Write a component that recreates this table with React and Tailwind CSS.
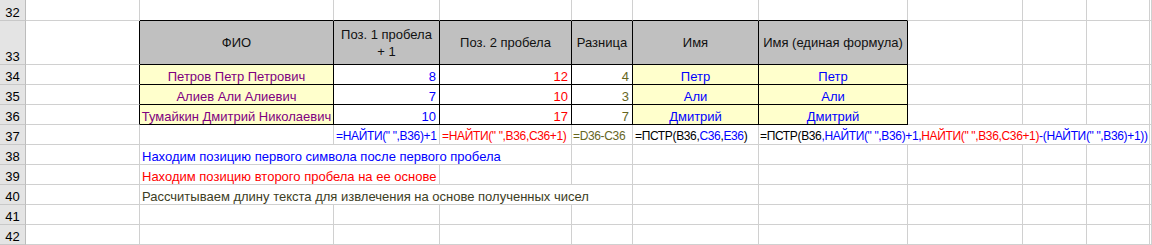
const SPAN = {
  1: "",
  2: "col-span-2",
  3: "col-span-3",
  4: "col-span-4",
};

const Cell = ({ span = 1, dark, darkR, darkB, className = "", children }) => {
  const r = dark || darkR ? "border-r-black" : "border-r-[#d0d0d0]";
  const b = dark || darkB ? "border-b-black" : "border-b-[#d0d0d0]";
  return (
    <div
      className={`${SPAN[span]} flex items-end whitespace-nowrap overflow-visible border-r border-b ${r} ${b} ${className}`}
    >
      {children}
    </div>
  );
};

const RowHead = ({ n }) => (
  <div className="flex items-end justify-center border-r border-b border-r-[#bcbcbc] border-b-[#c8c8c8] bg-[#e4e4e4] text-black">
    {n}
  </div>
);

const Blank = ({ count }) =>
  Array.from({ length: count }).map((_, i) => <Cell key={i} />);

const names = [
  ["Петров Петр Петрович", 8, 12, 4, "Петр"],
  ["Алиев Али Алиевич", 7, 10, 3, "Али"],
  ["Тумайкин Дмитрий Николаевич", 10, 17, 7, "Дмитрий"],
];

const headers = [
  "ФИО",
  "Поз. 1 пробела + 1",
  "Поз. 2 пробела",
  "Разница",
  "Имя",
  "Имя (единая формула)",
];

// formulas in row 37 render narrower than the plain text
const formula = "text-[12px] tracking-[-0.35px]";

export default function App() {
  return (
    <div className="w-[1152px] h-[245px] overflow-hidden bg-white font-['Liberation_Sans',Arial,sans-serif] text-[13px] leading-[15px]">
      <div className="grid grid-cols-[26px_114px_194px_106px_132px_61px_126px_149px_115px_64px_63px_1fr] grid-rows-[21px_44px_20px_20px_20px_20px_20px_20px_20px_20px_20px]">
        {/* 32 */}
        <RowHead n={32} />
        <Cell />
        {[0, 1, 2, 3, 4, 5].map((i) => (
          <Cell key={i} darkB />
        ))}
        <Blank count={4} />

        {/* 33 */}
        <RowHead n={33} />
        <Cell darkR />
        {headers.map((h) => (
          <Cell
            key={h}
            dark
            className="!items-center justify-center text-center whitespace-normal bg-[#c0c0c0] text-[#111] leading-[17px] px-1"
          >
            {h === "Поз. 1 пробела + 1" ? (
              <span>
                Поз. 1 пробела
                <br />+ 1
              </span>
            ) : (
              h
            )}
          </Cell>
        ))}
        <Blank count={4} />

        {/* 34 - 36 */}
        {names.map(([fio, c, d, e, name], i) => (
          <div key={fio} className="contents">
            <RowHead n={34 + i} />
            <Cell darkR />
            <Cell dark className="justify-center bg-[#ffffcc] text-[#800080]">
              {fio}
            </Cell>
            <Cell dark className="justify-end pr-[3px] text-[#0000ff]">
              {c}
            </Cell>
            <Cell dark className="justify-end pr-[3px] text-[#ff0000]">
              {d}
            </Cell>
            <Cell dark className="justify-end pr-[3px] text-[#66661f]">
              {e}
            </Cell>
            <Cell dark className="justify-center bg-[#ffffcc] text-[#0000ff]">
              {name}
            </Cell>
            <Cell dark className="justify-center bg-[#ffffcc] text-[#0000ff]">
              {name}
            </Cell>
            <Blank count={4} />
          </div>
        ))}

        {/* 37 */}
        <RowHead n={37} />
        <Cell />
        <Cell />
        <Cell className={`pl-[2px] text-[#0000ff] ${formula}`}>
          {'=НАЙТИ(" ",B36)+1'}
        </Cell>
        <Cell className={`pl-[2px] text-[#ff0000] ${formula}`}>
          {'=НАЙТИ(" ",B36,C36+1)'}
        </Cell>
        <Cell className={`pl-[1px] text-[#66661f] ${formula}`}>=D36-C36</Cell>
        <Cell className={`pl-[2px] text-black ${formula}`}>
          <span>
            =ПСТР(B36,<span className="text-[#0000ff]">C36</span>,
            <span className="text-[#0000ff]">E36</span>)
          </span>
        </Cell>
        <Cell span={4} className={`pl-[1px] text-black ${formula}`}>
          <span>
            =ПСТР(B36
            <span className="text-[#0000ff]">{',НАЙТИ(" ",B36)+1,'}</span>
            <span className="text-[#ff0000]">{'НАЙТИ(" ",B36,C36+1)'}</span>
            <span className="text-[#0000ff]">{'-(НАЙТИ(" ",B36)+1))'}</span>
          </span>
        </Cell>
        <Cell />

        {/* 38 */}
        <RowHead n={38} />
        <Cell />
        <Cell span={3} className="pl-[2px] text-[#0000ff]">
          Находим позицию первого символа после первого пробела
        </Cell>
        <Blank count={7} />

        {/* 39 */}
        <RowHead n={39} />
        <Cell />
        <Cell span={2} className="pl-[2px] text-[#ff0000]">
          Находим позицию второго пробела на ее основе
        </Cell>
        <Blank count={8} />

        {/* 40 */}
        <RowHead n={40} />
        <Cell />
        <Cell span={4} className="pl-[2px] text-[#3d3d24]">
          Рассчитываем длину текста для извлечения на основе полученных чисел
        </Cell>
        <Blank count={6} />

        {/* 41, 42 */}
        <RowHead n={41} />
        <Blank count={11} />
        <RowHead n={42} />
        <Blank count={11} />
      </div>
    </div>
  );
}
